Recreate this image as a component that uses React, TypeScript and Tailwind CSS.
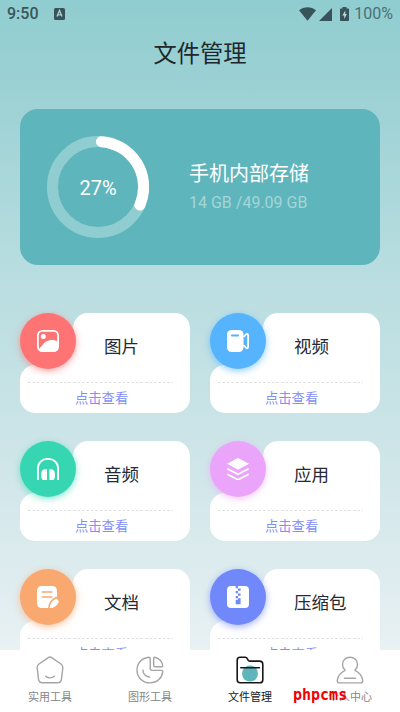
import type { ReactNode } from "react";
import clsx from "clsx";

interface FileCategory {
  name: string;
  circle: string;
  icon: ReactNode;
}

interface Tab {
  label: string;
  icon: ReactNode;
  active?: boolean;
}

const categories: FileCategory[] = [
  {
    name: "图片",
    circle: "bg-[#fe7373] shadow-[0_2px_7px_rgba(254,115,115,0.65)]",
    icon: (
      <svg viewBox="0 0 22 22" className="size-[22px]">
        <rect x="0.9" y="0.9" width="20.2" height="20.2" rx="4.5" fill="none" stroke="white" strokeWidth="1.8" />
        <circle cx="6.3" cy="6.6" r="2.5" fill="white" />
        <path d="M2 19c3-3 5.500-8 10.500-8.800 3.200-.6 6.300 0 8.500 1.300V17a4 4 0 0 1-4 4H5.500Z" fill="white" />
      </svg>
    ),
  },
  {
    name: "视频",
    circle: "bg-[#56b4ff] shadow-[0_2px_7px_rgba(86,180,255,0.65)]",
    icon: (
      <svg viewBox="0 0 22 22" className="size-[22px]">
        <rect width="16.500" height="22" rx="4.500" fill="white" />
        <path d="M4.800 5.500h6.400" stroke="#56b4ff" strokeWidth="1.800" strokeLinecap="round" />
        <path d="m16.500 7 2.600-2.700c1-.9 2-.4 2 .8v12c0 1.200-1 1.600-2 .8L16.500 15" fill="none" stroke="white" strokeWidth="1.700" />
      </svg>
    ),
  },
  {
    name: "音频",
    circle: "bg-[#37d6b3] shadow-[0_2px_7px_rgba(55,214,179,0.6)]",
    icon: (
      <svg viewBox="0 0 22 22" className="size-[22px]">
        <path d="M.9 22V10.500C.9 4.800 5 .9 11 .9s10.100 3.900 10.100 9.600V22" fill="none" stroke="white" strokeWidth="1.800" />
        <path d="M10 11.200V22.500H8.200C5.800 22.500 4.300 21 4.300 18.500v-3c0-2.600 1.500-4.300 4-4.300ZM12.400 11.200v11.300h1.600c2.400 0 3.900-1.500 3.900-4v-3c0-2.600-1.500-4.300-3.900-4.300Z" fill="white" />
      </svg>
    ),
  },
  {
    name: "应用",
    circle: "bg-[#eaa5fa] shadow-[0_2px_7px_rgba(234,165,250,0.6)]",
    icon: (
      <svg viewBox="0 0 22 22" className="size-[22px]">
        <path d="M11 0 22 5.800 11 11.700 0 5.800Z" fill="white" />
        <path d="m.4 10.800 10.600 5.400 10.600-5.400M.4 16.300 11 21.800l10.600-5.500" fill="none" stroke="white" strokeWidth="1.700" />
      </svg>
    ),
  },
  {
    name: "文档",
    circle: "bg-[#f9a870] shadow-[0_2px_7px_rgba(249,168,112,0.65)]",
    icon: (
      <svg viewBox="0 0 22 22" className="size-[22px]">
        <path d="M4.500 0h11A4.500 4.500 0 0 1 20 4.500v6.300c-3.500.4-8.600 4.700-8.800 11.200H4.500A4.500 4.500 0 0 1 0 17.500v-13A4.500 4.500 0 0 1 4.500 0Z" fill="white" />
        <path d="M5.200 6h9.600M5.200 11h9.600" stroke="#f9a870" strokeWidth="1.500" strokeLinecap="round" />
        <path d="M12.800 22c-.3-3.400 2.500-8.200 6.700-9.600l2.500 2.800c-1.200 3.600-4.200 6.800-9.200 6.800Z" fill="white" />
      </svg>
    ),
  },
  {
    name: "压缩包",
    circle: "bg-[#7088fa] shadow-[0_2px_7px_rgba(112,136,250,0.65)]",
    icon: (
      <svg viewBox="0 0 22 22" className="size-[22px]">
        <rect width="22" height="22" rx="4" fill="white" />
        <path d="M8.700 0H11v2.300H8.700ZM11 2.500h2.600v2.300H11ZM8.700 5H11v2.300H8.700ZM11 7.500h2.600v2.300H11ZM8.700 10H11v2.300h2.600v6H8.700v-4.500H11V12.300H8.700Z" fill="#7088fa" />
      </svg>
    ),
  },
];

const tabs: Tab[] = [
  {
    label: "实用工具",
    icon: (
      <svg viewBox="0 0 28 28" className="size-7" fill="none" stroke="#a5a5a5" strokeWidth="1.400" strokeLinecap="round" strokeLinejoin="round">
        <path d="M12 1.800 3 8C1.400 9.200 1 10 1.200 12l1.300 11.200c.3 2.500 1.500 3.600 4 3.600h15c2.500 0 3.700-1.100 4-3.600L26.800 12c.2-2-.2-2.800-1.800-4L16 1.800c-1.400-1-2.600-1-4 0Z" />
        <path d="M9.700 20.200c2.300 2.200 6.200 2.200 8.600 0" />
      </svg>
    ),
  },
  {
    label: "图形工具",
    icon: (
      <svg viewBox="0 0 28 28" className="size-7" fill="none" stroke="#a5a5a5" strokeWidth="1.400" strokeLinecap="round" strokeLinejoin="round">
        <path d="M13 1.200c.8 0 1.200.4 1.200 1.200v10.200c0 1.200.6 1.800 1.800 1.800h9.500c.9 0 1.300.5 1.200 1.400C26 22.200 20.900 26.900 14 26.900 6.800 26.900 1 21.200 1 14.200 1 7.200 6 1.800 13 1.200Z" />
        <path d="M18.600 1.200c4.200.9 7.300 4 8.100 8.200.2.900-.2 1.300-1.100 1.300h-6.400c-1 0-1.500-.5-1.500-1.500V2.200c0-.8.300-1.100.9-1Z" />
        <path d="M7 14.200c0 3.800 3 6.900 7 6.900" />
      </svg>
    ),
  },
  {
    label: "文件管理",
    active: true,
    icon: (
      <svg viewBox="0 0 28 28" className="size-7" fill="none" stroke="#171717" strokeWidth="1.600" strokeLinecap="round" strokeLinejoin="round">
        <circle cx="14" cy="17.500" r="8" fill="#5eb5bc" stroke="none" />
        <path d="M4 1.300h5.300c1.200 0 1.500.4 2 1.300l.6 1.200c.5 1 .9 1.300 2 1.300h9.600c2.200 0 3.300 1.200 3.300 3.300v15.300c0 2-1 3.100-3 3.100H4.200c-2 0-3-1-3-3V4.200c0-1.900.9-2.900 2.800-2.900Z" />
        <path d="M4.800 11.700h18.600" />
      </svg>
    ),
  },
  {
    label: "个人中心",
    icon: (
      <svg viewBox="0 0 28 28" className="size-7" fill="none" stroke="#a5a5a5" strokeWidth="1.400" strokeLinecap="round" strokeLinejoin="round">
        <path d="M14 1.200c-4.300 0-7.500 3.300-7.500 7.400 0 2.400.9 4.300 2.600 5.700C4.800 16.300 2 19.600 1.300 24.200c-.3 1.900.4 2.700 2.200 2.700h21c1.800 0 2.500-.8 2.200-2.700-.7-4.600-3.500-7.900-7.800-9.900 1.700-1.400 2.600-3.300 2.600-5.700 0-4.100-3.200-7.400-7.500-7.400Z" />
        <path d="M8.500 22.300h11" />
      </svg>
    ),
  },
];

function StatusBar() {
  return (
    <div className="flex h-7 items-center pl-[7px] pr-[7px] text-[16px] text-[#3b5558]">
      <span className="font-medium">9:50</span>
      <svg viewBox="0 0 11 12" className="ml-[15px] h-3 w-[11px]">
        <rect width="11" height="12" rx="1.500" fill="#38545a" />
        <path d="m3 8.500 2.500-6 2.500 6M3.900 6.800h3.200" fill="none" stroke="#a9d3d6" strokeWidth="1.300" />
      </svg>
      <div className="ml-auto flex items-center">
        <svg viewBox="0 0 17 14" className="h-3.5 w-[17px]">
          <path d="M0 3.200C4.800-.9 12.200-.9 17 3.200L8.500 13.800Z" fill="#38545a" />
        </svg>
        <svg viewBox="0 0 13 13" className="ml-[3px] size-[13px]">
          <path d="M13 0v13H0Z" fill="#38545a" />
        </svg>
        <svg viewBox="0 0 9 14" className="ml-[8px] h-3.5 w-[9px]">
          <path d="M2.500 0h4v1.400H8c.6 0 1 .4 1 1V13c0 .6-.4 1-1 1H1c-.6 0-1-.4-1-1V2.400c0-.6.400-1 1-1h1.500Z" fill="#38545a" />
          <path d="M5.300 3.500 2.300 8.500h1.900v3.500l2.700-5H5.300Z" fill="#b5dadc" />
        </svg>
        <span className="ml-[5px] text-[#4b7074]">100%</span>
      </div>
    </div>
  );
}

function StorageCard() {
  return (
    <section className="mx-5 mt-[29px] flex h-[156px] items-center rounded-[18px] bg-[#5eb5bc] pl-[27px] text-white">
      <div className="grid size-[102px] place-items-center">
        <svg viewBox="0 0 102 102" className="col-start-1 row-start-1 size-[102px]" fill="none" strokeWidth="11">
          <circle cx="51" cy="51" r="45.500" stroke="#90cdd0" />
          <path d="M54.500 5.640A45.500 45.500 0 0 1 92.900 69.100" stroke="white" strokeLinecap="round" />
        </svg>
        <span className="col-start-1 row-start-1 pt-0.5 text-[20px] leading-6">27%</span>
      </div>
      <div className="ml-10">
        <h2 className="text-[20px] leading-7">手机内部存储</h2>
        <p className="mt-[3px] text-[16px] leading-6 text-[#a5d5d8]">14 GB /49.09 GB</p>
      </div>
    </section>
  );
}

function CategoryCard({ name, circle, icon }: FileCategory) {
  return (
    <div className="relative isolate flex h-[100px] flex-col">
      {/* fills the inner corner behind the circle */}
      <div className="absolute left-7 top-7 -z-10 size-7 bg-white" />
      <div className={clsx("absolute left-0 top-0 flex size-14 items-center justify-center rounded-full", circle)}>
        {icon}
      </div>
      <div className="-z-10 ml-[53px] h-[52px] rounded-t-[15px] bg-white pl-[31px] pt-[21px]">
        <h3 className="text-[17.500px] leading-[26px] text-[#252a33]">{name}</h3>
      </div>
      <div className="-z-20 h-12 rounded-b-[15px] rounded-tl-[15px] bg-white pl-2 pr-4 pt-[17px]">
        <svg viewBox="0 0 146 1" className="h-px w-full">
          <path d="M0 .5h145" stroke="#dedede" strokeDasharray="2.500 2" />
        </svg>
        <p className="ml-[47px] mt-[6px] text-[13.300px] leading-5 text-[#7f90fa]">点击查看</p>
      </div>
    </div>
  );
}

function TabBar() {
  return (
    <nav className="relative z-10 grid h-[62px] shrink-0 grid-cols-4 bg-white">
      {tabs.map(({ label, icon, active }) => (
        <div key={label} className="flex flex-col items-center pt-[5.500px]">
          {icon}
          <span className={clsx("mt-[6px] text-[11px] leading-4", active ? "text-[#171717]" : "text-[#858585]")}>
            {label}
          </span>
        </div>
      ))}
      <span className="absolute left-[293px] top-[35px] font-['DejaVu_Sans_Mono',monospace] text-[15px] font-bold leading-5 text-[#f20000]">
        phpcms
      </span>
    </nav>
  );
}

export default function App() {
  return (
    <div className="flex h-[712px] w-[400px] flex-col overflow-hidden bg-[linear-gradient(180deg,#90cdd0_0px,#9cd1d4_90px,#b8dde0_270px,#cbe4e7_430px,#dcebee_560px,#e8f1f3_650px)] font-[Roboto,'Noto_Sans_CJK_SC',sans-serif]">
      <StatusBar />
      <h1 className="mt-[9px] text-center text-[23.300px] leading-[34px] text-[#20262c]">文件管理</h1>
      <main className="min-h-0 flex-1 overflow-hidden pt-[9px]">
        <StorageCard />
        <div className="mx-5 mt-12 grid grid-cols-2 gap-x-5 gap-y-7">
          {categories.map((category) => (
            <CategoryCard key={category.name} {...category} />
          ))}
        </div>
      </main>
      <TabBar />
    </div>
  );
}
